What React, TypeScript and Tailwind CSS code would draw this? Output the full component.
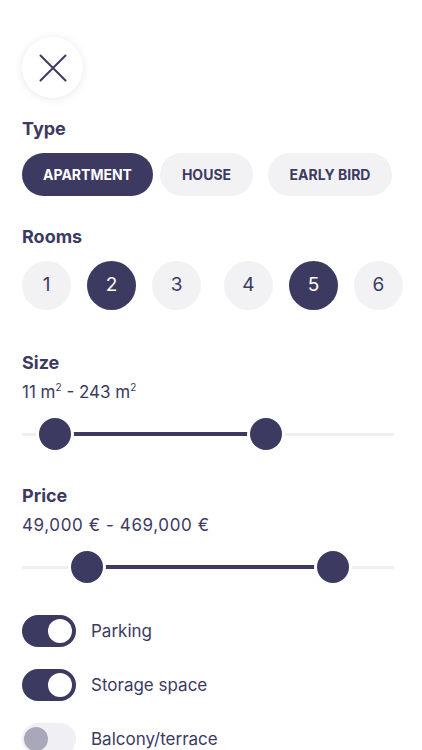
const navy = "text-[#3c3a61]"

function RangeSlider({ from, to }: { from: number; to: number }) {
  // from/to are thumb centers in px inside the 372px track
  return (
    <div className="relative h-8 w-[372px]">
      <div className="absolute left-0 right-0 top-[15px] h-[3px] rounded-full bg-[#efeff3]" />
      <div
        className="absolute top-[14px] h-[4px] bg-[#3c3a61]"
        style={{ left: from, width: to - from }}
      />
      <div
        className="absolute top-0 h-8 w-8 rounded-full bg-[#3c3a61] ring-[3px] ring-white"
        style={{ left: from - 16 }}
      />
      <div
        className="absolute top-0 h-8 w-8 rounded-full bg-[#3c3a61] ring-[3px] ring-white"
        style={{ left: to - 16 }}
      />
    </div>
  )
}

function Toggle({ on, label, className }: { on: boolean; label: string; className?: string }) {
  return (
    <div className={`flex items-center ${className ?? ""}`}>
      <div
        className={`flex h-8 w-[54px] items-center rounded-full ${
          on ? "justify-end bg-[#3c3a61] pr-[4px]" : "justify-start bg-[#f0f0f4] pl-[2px]"
        }`}
      >
        <div className={`h-6 w-6 rounded-full ${on ? "bg-white" : "bg-[#a9a8ba]"}`} />
      </div>
      <span className={`ml-[15px] text-[17px] leading-[22px] ${navy}`}>{label}</span>
    </div>
  )
}

export default function App() {
  const rooms = [
    { n: "1", on: false, ml: "" },
    { n: "2", on: true, ml: "ml-[16px]" },
    { n: "3", on: false, ml: "ml-[16px]" },
    { n: "4", on: false, ml: "ml-[23px]" },
    { n: "5", on: true, ml: "ml-[16px]" },
    { n: "6", on: false, ml: "ml-[16px]" },
  ]

  return (
    <div
      className="h-[750px] w-[422px] overflow-hidden bg-white px-[22px] pt-[37px]"
      style={{ fontFamily: "Inter, 'Noto Sans', sans-serif" }}
    >
      <button className="flex h-[61px] w-[61px] items-center justify-center rounded-full bg-white shadow-[0_1px_8px_rgba(40,40,80,0.10)]">
        <svg width="28" height="28" viewBox="0 0 28 28" fill="none">
          <path d="M1.5 1.5 L26.5 26.5 M26.5 1.5 L1.5 26.5" stroke="#3c3a61" strokeWidth="2" strokeLinecap="round" />
        </svg>
      </button>

      <h2 className={`mt-[19px] text-[18px] font-bold leading-[24px] ${navy}`}>Type</h2>
      <div className="mt-[12px] flex">
        <div className="flex h-[43px] w-[131px] shrink-0 items-center justify-center rounded-full bg-[#3c3a61] text-[14px] font-bold text-white">
          APARTMENT
        </div>
        <div className={`ml-[7px] flex h-[43px] w-[93px] shrink-0 items-center justify-center rounded-full bg-[#f2f2f5] text-[14px] font-bold ${navy}`}>
          HOUSE
        </div>
        <div className={`ml-[15px] flex h-[43px] w-[124px] shrink-0 items-center justify-center rounded-full bg-[#f2f2f5] text-[14px] font-bold ${navy}`}>
          EARLY BIRD
        </div>
      </div>

      <h2 className={`mt-[29px] text-[18px] font-bold leading-[24px] ${navy}`}>Rooms</h2>
      <div className="mt-[12px] flex">
        {rooms.map((r) => (
          <div
            key={r.n}
            className={`flex h-[49px] w-[49px] shrink-0 items-center justify-center rounded-full text-[19px] ${r.ml} ${
              r.on ? "bg-[#3c3a61] text-white" : `bg-[#f2f2f5] ${navy}`
            }`}
          >
            {r.n}
          </div>
        ))}
      </div>

      <h2 className={`mt-[41px] text-[18px] font-bold leading-[24px] ${navy}`}>Size</h2>
      <p className={`mt-[6px] text-[17px] leading-[22px] ${navy}`}>
        11 m<sup className="-top-[7px] text-[10px]">2</sup> - 243 m<sup className="-top-[7px] text-[10px]">2</sup>
      </p>
      <div className="mt-[15px]">
        <RangeSlider from={33} to={244} />
      </div>

      <h2 className={`mt-[34px] text-[18px] font-bold leading-[24px] ${navy}`}>Price</h2>
      <p className={`mt-[6px] text-[17px] leading-[22px] tracking-[0.6px] ${navy}`}>49,000 € - 469,000 €</p>
      <div className="mt-[15px]">
        <RangeSlider from={65} to={311} />
      </div>

      <Toggle on label="Parking" className="mt-[32px]" />
      <Toggle on label="Storage space" className="mt-[22px]" />
      <Toggle on={false} label="Balcony/terrace" className="mt-[22px]" />
    </div>
  )
}
